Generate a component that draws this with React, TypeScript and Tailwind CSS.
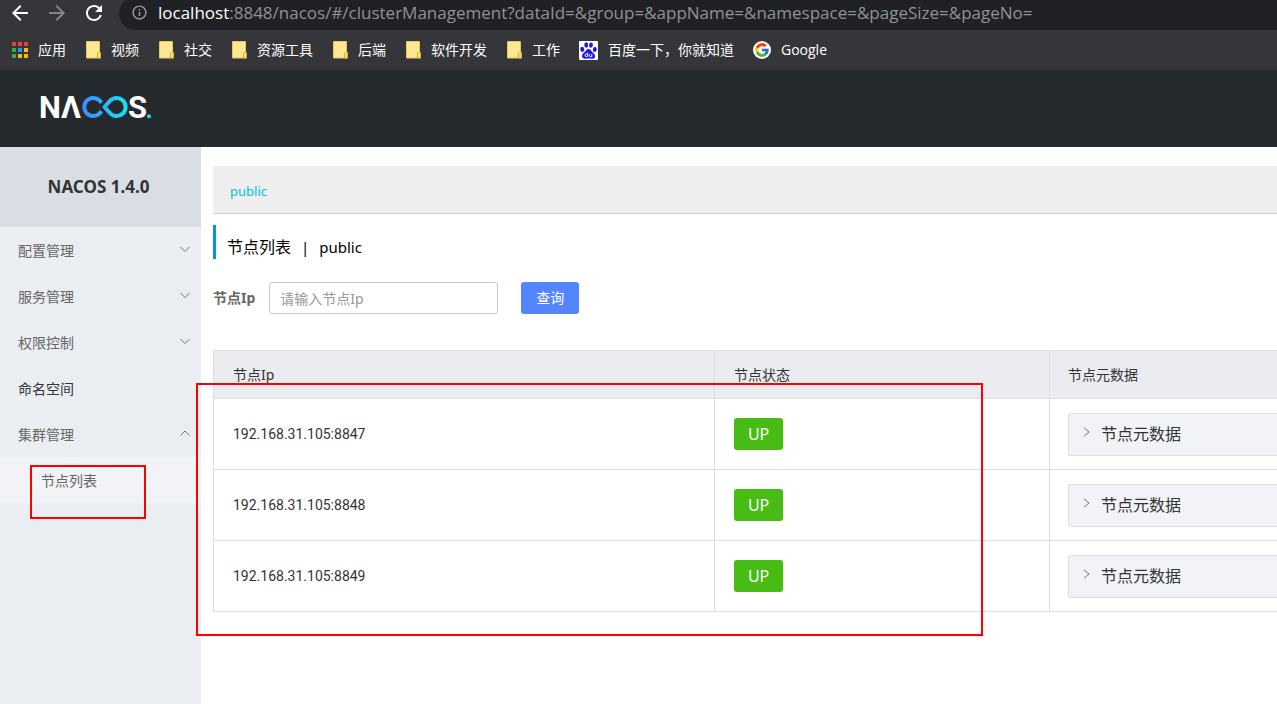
import { FcGoogle } from "react-icons/fc";
import { MdArrowBack, MdArrowForward, MdInfoOutline, MdRefresh } from "react-icons/md";

const folders = ["视频", "社交", "资源工具", "后端", "软件开发", "工作"];
const groups = ["配置管理", "服务管理", "权限控制"];
const nodes = ["192.168.31.105:8847", "192.168.31.105:8848", "192.168.31.105:8849"];

type Direction = "down" | "up" | "right";

const chevrons: Record<Direction, string> = {
  down: "M0.5 3 5 7.5 9.5 3",
  up: "M0.5 7.5 5 3 9.5 7.5",
  right: "M2 0.8 7 5 2 9.2",
};

function Chevron({ direction }: { direction: Direction }) {
  return (
    <svg viewBox="0 0 10 10" className="mb-1 size-2.5 shrink-0" fill="none" stroke="#6f757c" strokeWidth="1" aria-hidden="true">
      <path d={chevrons[direction]} />
    </svg>
  );
}

function AppsIcon() {
  const colors = ["#ea4335", "#ea4335", "#ea4335", "#34a853", "#2196f3", "#fbbc05", "#34a853", "#fbbc05", "#fbbc05"];
  return (
    <svg viewBox="0 0 16 16" className="size-4" aria-hidden="true">
      {colors.map((color, i) => (
        <rect key={i} x={(i % 3) * 6} y={Math.floor(i / 3) * 6} width="4" height="4" fill={color} />
      ))}
    </svg>
  );
}

function FolderIcon() {
  return (
    <svg viewBox="-1 0 16 18" className="h-[18px] w-4" aria-hidden="true">
      <path d="M0.5 0.5H13.5V11.5H14.5V17H0.5Z" fill="#ffe793" stroke="#e3c75a" />
      <path d="M11.5 17V12.5Q11.5 11.5 12.5 11.5H14.5V17Z" fill="#ffe07a" stroke="#d4ae35" />
    </svg>
  );
}

function BaiduIcon() {
  return (
    <svg viewBox="0 0 19 19" className="size-[19px]" aria-hidden="true">
      <rect width="19" height="19" rx="1" fill="#fff" />
      <g fill="#2319dc">
        <ellipse cx="3.3" cy="8.3" rx="2" ry="2.6" transform="rotate(-12 3.3 8.3)" />
        <ellipse cx="7.2" cy="4" rx="1.9" ry="2.7" />
        <ellipse cx="12" cy="4.1" rx="1.9" ry="2.7" transform="rotate(8 12 4.1)" />
        <ellipse cx="15.8" cy="8.5" rx="1.9" ry="2.5" transform="rotate(12 15.8 8.5)" />
        <path d="M9.5 8C7.6 8 7.2 9.8 5.7 11.1C4.1 12.5 2.8 13.3 3 15.3C3.2 17.3 4.9 18 6.7 17.7C8.6 17.4 10.4 17.4 12.4 17.7C14.3 18 16 17.3 16.1 15.2C16.2 13.3 14.5 12.4 13.3 11C12.1 9.6 11.5 8 9.5 8Z" />
      </g>
      <g fill="none" stroke="#fff" strokeWidth="0.9">
        <circle cx="7.3" cy="14.3" r="1.3" />
        <path d="M8.7 11.7V15.8M10.5 13V14.8Q10.5 15.7 11.5 15.7H12.8V13" />
      </g>
    </svg>
  );
}

function NacosLogo() {
  return (
    <svg viewBox="-4 -10 120 46" className="h-[46px] w-[120px]" role="img" aria-label="NACOS">
      <defs>
        <linearGradient id="loop" gradientUnits="userSpaceOnUse" x1="42" y1="0" x2="88" y2="0">
          <stop offset="0" stopColor="#4287ff" />
          <stop offset="1" stopColor="#17e3f5" />
        </linearGradient>
      </defs>
      <g fill="#fff" fontFamily="Roboto, sans-serif" fontWeight="700" fontSize="31">
        <text x="-1" y="24">N</text>
        <text x="21" y="24">Λ</text>
        <text x="88" y="24">S</text>
      </g>
      <g fill="none" stroke="url(#loop)" strokeWidth="4">
        <path d="M61.5 8.6 59.4 6.4A9 9 0 1 0 59.4 19.6L61.5 17.4" />
        <path d="M64.5 13 70 6.9A9 9 0 1 1 70 19.1Z" strokeLinejoin="round" />
      </g>
      <circle cx="109" cy="22.3" r="2" fill="#17e3f5" />
    </svg>
  );
}

function Bookmark({ icon, label }: { icon: React.ReactNode; label: string }) {
  return (
    <a href="#" className="flex shrink-0 items-center gap-2.5">
      {icon}
      <span>{label}</span>
    </a>
  );
}

function BrowserBar() {
  return (
    <div className="bg-[#35363a] font-['Open_Sans','Noto_Sans_CJK_SC',sans-serif] text-white">
      <div className="flex h-[30px] items-end overflow-hidden pl-2">
        <div className="flex items-center gap-[13px] pb-[5px] text-2xl">
          <button type="button" aria-label="后退"><MdArrowBack /></button>
          <button type="button" aria-label="前进" className="text-[#85868a]"><MdArrowForward /></button>
          <button type="button" aria-label="刷新"><MdRefresh /></button>
        </div>
        <div className="ml-[13px] flex h-[33px] flex-1 items-center gap-2.5 rounded-l-full bg-[#202124] pb-0.5 pl-3">
          <MdInfoOutline className="size-[17px] text-[#9aa0a6]" />
          <span className="text-[17px] leading-5 whitespace-nowrap text-[#8f9296]">
            <span className="text-white">localhost</span>
            :8848/nacos/#/clusterManagement?dataId=&group=&appName=&namespace=&pageSize=&pageNo=
          </span>
        </div>
      </div>
      <nav className="flex h-10 items-center gap-[19px] pl-3 text-sm">
        <Bookmark icon={<AppsIcon />} label="应用" />
        {folders.map((name) => (
          <Bookmark key={name} icon={<FolderIcon />} label={name} />
        ))}
        <Bookmark icon={<BaiduIcon />} label="百度一下，你就知道" />
        <Bookmark
          icon={
            <span className="flex size-[18px] items-center justify-center rounded-full bg-white">
              <FcGoogle className="size-4" />
            </span>
          }
          label="Google"
        />
      </nav>
    </div>
  );
}

function Sidebar() {
  return (
    <aside className="w-[201px] shrink-0 bg-[#eaedf1] text-sm text-[#666]">
      <h1 className="flex h-20 items-center justify-center bg-[#d9dde4] pr-1 text-[17px] font-bold text-[#333]">
        NACOS 1.4.0
      </h1>
      <ul>
        {groups.map((name) => (
          <li key={name}>
            <button type="button" className="flex h-[46px] w-full items-center justify-between pt-0.5 pr-[11px] pl-[18px]">
              {name}
              <Chevron direction="down" />
            </button>
          </li>
        ))}
        <li>
          <a href="#" className="flex h-[46px] items-center pt-0.5 pl-[18px] text-[#333]">命名空间</a>
        </li>
        <li>
          <button type="button" className="flex h-[46px] w-full items-center justify-between pt-0.5 pr-[11px] pl-[18px]">
            集群管理
            <Chevron direction="up" />
          </button>
          <div className="relative">
            <a href="#" className="flex h-[46px] items-center bg-[#f2f3f7] pt-0.5 pl-[41px]">节点列表</a>
            <div className="pointer-events-none absolute top-2 left-[30px] h-[54px] w-[116px] border-2 border-[#ff0000]" />
          </div>
        </li>
      </ul>
    </aside>
  );
}

function NodeTable() {
  return (
    <div className="relative mt-9">
      <table className="w-full table-fixed border-collapse text-left text-sm text-[#333]">
        <thead>
          <tr className="h-12 bg-[#ebecf0]">
            <th className="w-[47.1%] border border-[#dcdee3] px-[19px] font-normal">节点Ip</th>
            <th className="w-[31.5%] border border-[#dcdee3] px-[19px] font-normal">节点状态</th>
            <th className="border border-r-0 border-[#dcdee3] px-[18px] font-normal">节点元数据</th>
          </tr>
        </thead>
        <tbody>
          {nodes.map((node) => (
            <tr key={node} className="h-[71px]">
              <td className="border border-[#dcdee3] px-[19px] font-['Roboto',sans-serif]">{node}</td>
              <td className="border border-[#dcdee3] px-[19px]">
                <span className="inline-flex h-8 items-center rounded-[3px] bg-[#46bc15] px-3.5 align-middle text-base text-white">UP</span>
              </td>
              <td className="border border-r-0 border-[#dcdee3] pl-[18px]">
                <button
                  type="button"
                  className="flex h-[43px] w-full items-center gap-[9px] rounded-l-[3px] border border-r-0 border-[#dcdee3] bg-[#f2f3f7] pl-[13px] text-base"
                >
                  <Chevron direction="right" />
                  节点元数据
                </button>
              </td>
            </tr>
          ))}
        </tbody>
      </table>
      <div className="pointer-events-none absolute top-[33px] -left-[17px] h-[253px] w-[787px] border-2 border-[#ff0000]" />
    </div>
  );
}

export default function App() {
  return (
    <div className="flex min-h-screen flex-col overflow-x-hidden bg-white font-['Noto_Sans','Noto_Sans_CJK_SC',sans-serif]">
      <BrowserBar />
      <header className="flex h-[77px] items-center bg-[#252a2f] pb-[3px] pl-9">
        <NacosLogo />
      </header>
      <div className="flex flex-1">
        <Sidebar />
        <main className="min-w-0 flex-1 pt-[19px] pl-3">
          <div className="flex h-12 items-center border-b border-[#ccc] bg-[#eee] pt-1 pl-[17px] text-[13px]">
            <a href="#" className="text-[#00c1de]">public</a>
          </div>
          <h2 className="mt-[11px] flex h-[34px] items-center gap-2.5 border-l-3 border-[#09c] pt-2.5 pl-[11px] text-base text-black">
            <span>节点列表</span>
            <span className="text-[15px]">|</span>
            <span className="text-[15px]">public</span>
          </h2>
          <form className="mt-[23px] flex items-center" onSubmit={(e) => e.preventDefault()}>
            <label htmlFor="node-ip" className="text-sm font-bold text-[#666]">节点Ip</label>
            <input
              id="node-ip"
              type="text"
              placeholder="请输入节点Ip"
              className="ml-3.5 h-8 w-[229px] rounded-[3px] border border-[#c4c6cf] bg-white px-2.5 text-sm placeholder:text-[#999]"
            />
            <button type="submit" className="ml-[23px] h-8 rounded-[3px] bg-[#5584ff] px-[15px] text-sm text-white">
              查询
            </button>
          </form>
          <NodeTable />
        </main>
      </div>
    </div>
  );
}
